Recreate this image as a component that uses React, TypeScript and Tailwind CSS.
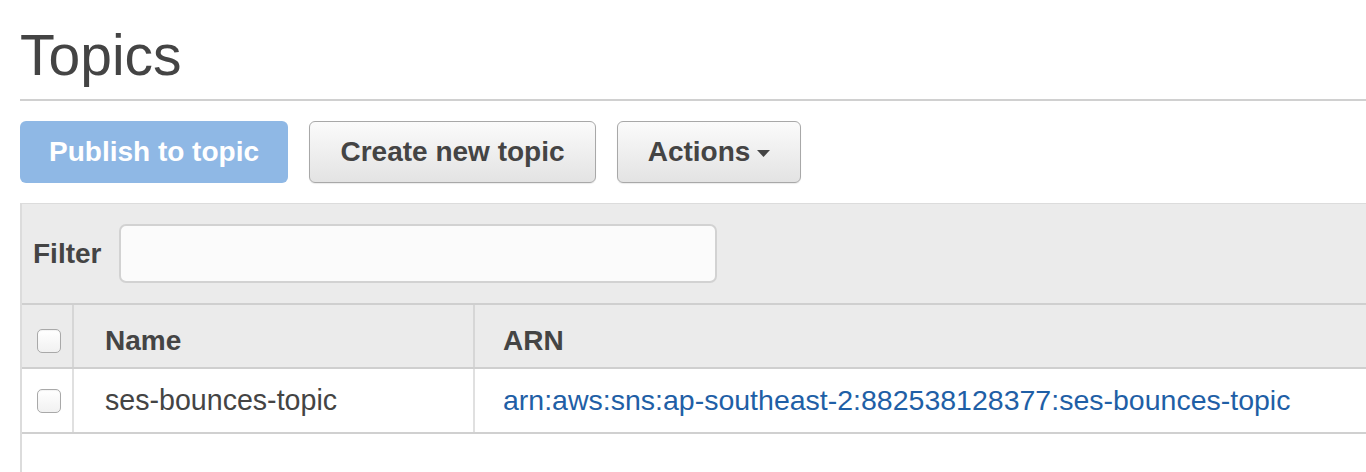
import React from "react";

function Checkbox() {
  return (
    <div className="w-[24px] h-[24px] rounded-[5px] border border-[#a9a9a9] bg-gradient-to-b from-[#ffffff] to-[#f1f1f1] shadow-[inset_0_1px_1px_rgba(0,0,0,0.05)]" />
  );
}

export default function App() {
  return (
    <div className="w-[1366px] h-[472px] overflow-hidden bg-white font-['Liberation_Sans','Helvetica_Neue',Arial,sans-serif] text-[#444]">
      <div className="pl-[20px]">
        <h1 className="pt-[27px] text-[57px] leading-[57px] font-normal text-[#444]">Topics</h1>
        <div className="mt-[15px] h-[2px] bg-[#d0d0d0]" />
        <div className="mt-[20px] flex gap-[21px] h-[62px]">
          <button className="w-[268px] h-[62px] rounded-[6px] bg-[#8fb8e5] text-white font-bold text-[28px] flex items-center justify-center">
            Publish to topic
          </button>
          <button className="w-[287px] h-[62px] rounded-[6px] border border-[#a8a8a8] bg-gradient-to-b from-[#fbfbfb] to-[#e3e3e3] text-[#444] font-bold text-[28px] flex items-center justify-center shadow-[0_1px_1px_rgba(0,0,0,0.08)]">
            Create new topic
          </button>
          <button className="w-[184px] h-[62px] rounded-[6px] border border-[#a8a8a8] bg-gradient-to-b from-[#fbfbfb] to-[#e3e3e3] text-[#444] font-bold text-[28px] flex items-center justify-center gap-[7px] shadow-[0_1px_1px_rgba(0,0,0,0.08)]">
            <span>Actions</span>
            <svg width="13" height="7" viewBox="0 0 13 7" className="mt-[2px]">
              <polygon points="0,0 13,0 6.5,7" fill="#444" />
            </svg>
          </button>
        </div>
        <div className="mt-[20px] border-t border-l-2 border-[#dcdcdc] h-[300px]">
          <div className="h-[99px] bg-[#ebebeb] flex items-center pl-[11px]">
            <span className="font-bold text-[28px] text-[#444]">Filter</span>
            <div className="ml-[18px] w-[598px] h-[59px] rounded-[7px] border-2 border-[#d2d2d2] bg-[#fbfbfb]" />
          </div>
          <div className="border-t-2 border-b-2 border-[#cfcfcf] bg-[#ebebeb] h-[66px] flex">
            <div className="w-[52px] border-r-2 border-[#d6d6d6] flex items-center pl-[15px] pt-[10px]">
              <Checkbox />
            </div>
            <div className="w-[401px] border-r-2 border-[#d6d6d6] flex items-center pl-[31px] pt-[10px] font-bold text-[28px] text-[#444]">
              Name
            </div>
            <div className="flex-1 flex items-center pl-[28px] pt-[10px] font-bold text-[28px] text-[#444]">
              ARN
            </div>
          </div>
          <div className="border-b-2 border-[#d0d0d0] bg-white h-[65px] flex">
            <div className="w-[52px] border-r-2 border-[#e0e0e0] flex items-center pl-[15px]">
              <Checkbox />
            </div>
            <div className="w-[401px] border-r-2 border-[#e0e0e0] flex items-center pl-[31px] text-[28.6px] text-[#444]">
              ses-bounces-topic
            </div>
            <div className="flex-1 flex items-center pl-[28px] text-[28.5px] text-[#1f5fa6] whitespace-nowrap">
              arn:aws:sns:ap-southeast-2:882538128377:ses-bounces-topic
            </div>
          </div>
          <div className="bg-white h-full" />
        </div>
      </div>
    </div>
  );
}
